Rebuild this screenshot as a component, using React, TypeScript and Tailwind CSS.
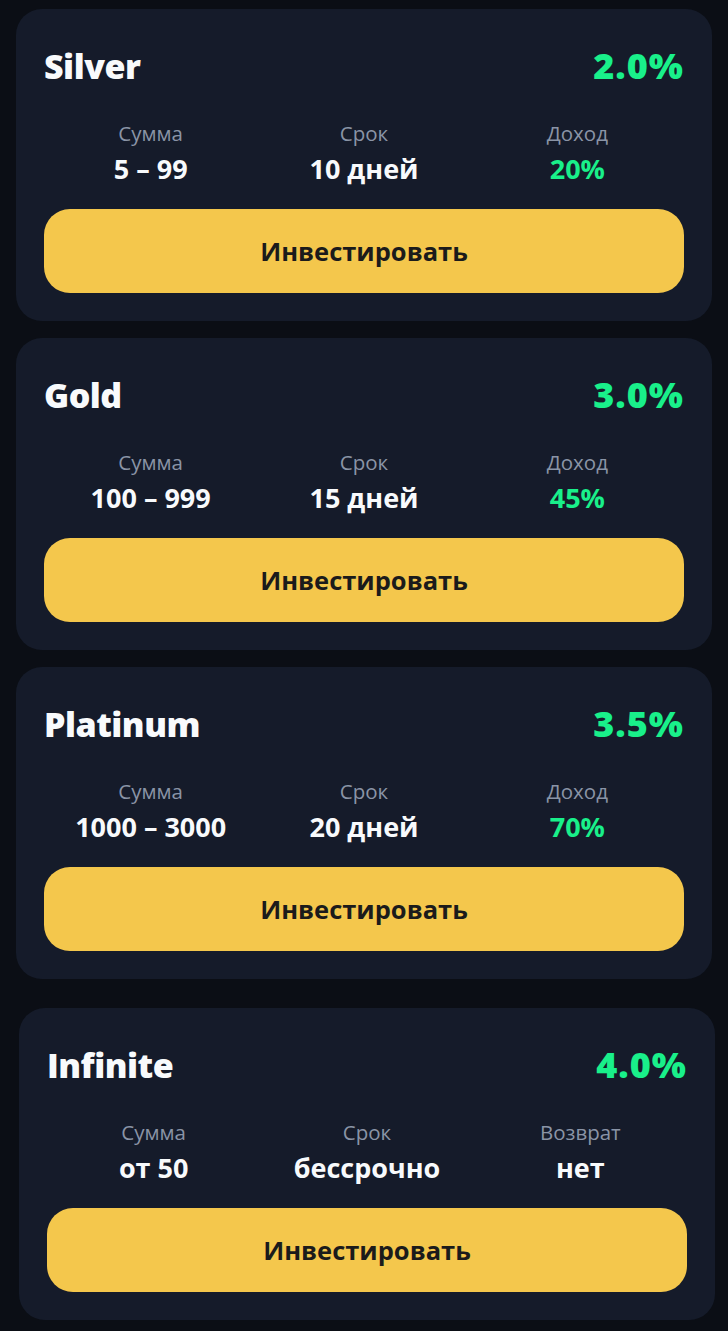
import React from "react";

type Plan = {
  name: string;
  rate: string;
  stats: { label: string; value: string; green?: boolean }[];
};

const plans: Plan[] = [
  {
    name: "Silver",
    rate: "2.0%",
    stats: [
      { label: "Сумма", value: "5 – 99" },
      { label: "Срок", value: "10 дней" },
      { label: "Доход", value: "20%", green: true },
    ],
  },
  {
    name: "Gold",
    rate: "3.0%",
    stats: [
      { label: "Сумма", value: "100 – 999" },
      { label: "Срок", value: "15 дней" },
      { label: "Доход", value: "45%", green: true },
    ],
  },
  {
    name: "Platinum",
    rate: "3.5%",
    stats: [
      { label: "Сумма", value: "1000 – 3000" },
      { label: "Срок", value: "20 дней" },
      { label: "Доход", value: "70%", green: true },
    ],
  },
];

const infinite: Plan = {
  name: "Infinite",
  rate: "4.0%",
  stats: [
    { label: "Сумма", value: "от 50" },
    { label: "Срок", value: "бессрочно" },
    { label: "Возврат", value: "нет" },
  ],
};

function Card({ plan, className }: { plan: Plan; className: string }) {
  return (
    <div className={"rounded-[26px] bg-[#151b2a] p-7 " + className}>
      <div className="flex h-[58px] items-center justify-between">
        <div className="text-[34px] font-extrabold leading-none tracking-[-0.5px] text-[#f8fafc]">
          {plan.name}
        </div>
        <div className="text-[36px] font-extrabold leading-none tracking-[1px] text-[#19f08a]">
          {plan.rate}
        </div>
      </div>
      <div className="mt-6 grid grid-cols-3">
        {plan.stats.map((s) => (
          <div key={s.label} className="flex flex-col items-center">
            <div className="h-[28px] text-[20.5px] leading-[28px] text-[#8a94a6]">
              {s.label}
            </div>
            <div
              className={
                "mt-1 h-[36px] text-[27px] font-bold leading-[36px] " +
                (s.green ? "text-[#19f08a]" : "text-[#f8fafc]")
              }
            >
              {s.value}
            </div>
          </div>
        ))}
      </div>
      <button className="mt-[22px] flex h-[84px] w-full items-center justify-center rounded-[26px] bg-[#f4c74c] text-[25.5px] font-bold text-[#1b1b1b]">
        Инвестировать
      </button>
    </div>
  );
}

export default function App() {
  return (
    <div
      className="min-h-[1331px] w-full bg-[#0b0e15] pt-[9px] pb-[12px]"
      style={{ fontFamily: '"Open Sans", "Noto Sans", sans-serif' }}
    >
      <div className="flex flex-col gap-[17px] px-4">
        {plans.map((p) => (
          <Card key={p.name} plan={p} className="" />
        ))}
      </div>
      <Card plan={infinite} className="mt-[29px] ml-[19px] mr-[13px]" />
    </div>
  );
}
